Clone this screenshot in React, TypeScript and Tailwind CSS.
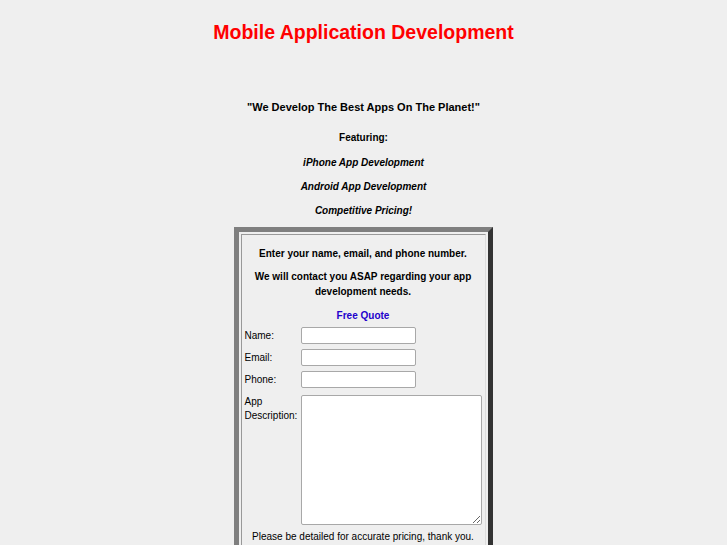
import React from "react";

const rows = ["Name:", "Email:", "Phone:"];

const features = ["iPhone App Development", "Android App Development", "Competitive Pricing!"];

export default function App() {
  return (
    <div className="min-h-screen bg-[#efefef] font-['Liberation_Sans',Arial,sans-serif] text-black">
      <div className="flex flex-col items-center">
        <h1 className="mt-[20px] text-[19.5px] font-bold leading-[24px] text-[#ff0000]">
          Mobile Application Development
        </h1>

        <p className="mt-[55px] text-[11px] font-bold leading-[16px]">
          "We Develop The Best Apps On The Planet!"
        </p>
        <p className="mt-[16px] text-[10px] font-bold leading-[14px]">Featuring:</p>
        <ul className="mt-[11px] flex flex-col items-center gap-[10px]">
          {features.map((f) => (
            <li key={f} className="text-[10px] font-bold italic leading-[14px]">
              {f}
            </li>
          ))}
        </ul>

        <div className="mt-[9px] mr-[1px] w-[259px] border-[5px] border-t-[#7f7f7f] border-l-[#7f7f7f] border-r-[#333333] border-b-[#333333] p-[2px]">
          <div className="border border-t-[#999999] border-l-[#999999] border-r-[#dddddd] border-b-[#dddddd] px-[3px] pt-[11px] pb-[6px]">
            <p className="text-center text-[10px] font-bold leading-[15px]">
              Enter your name, email, and phone number.
            </p>
            <p className="mt-[8px] text-center text-[10px] font-bold leading-[15px]">
              We will contact you ASAP regarding your app development needs.
            </p>
            <p className="mt-[9px] text-center text-[10px] font-bold leading-[15px] text-[#2200cc]">
              Free Quote
            </p>

            <div className="mt-[4px] flex flex-col gap-[5px]">
              {rows.map((label) => (
                <div key={label} className="flex items-center">
                  <span className="w-[56px] text-[10px] leading-[14px]">{label}</span>
                  <input
                    type="text"
                    className="h-[17px] w-[115px] rounded-[2px] border border-[#a8a8a8] bg-white"
                  />
                </div>
              ))}
              <div className="mt-[2px] flex items-start">
                <span className="w-[56px] text-[10px] leading-[14px]">
                  App
                  <br />
                  Description:
                </span>
                <textarea className="h-[130px] w-[181px] resize rounded-[2px] border border-[#a8a8a8] bg-white" />
              </div>
            </div>

            <p className="mt-[5px] text-center text-[10px] leading-[14px]">
              Please be detailed for accurate pricing, thank you.
            </p>
          </div>
        </div>
      </div>
    </div>
  );
}
